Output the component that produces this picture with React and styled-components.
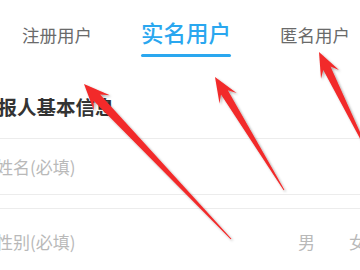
import styled, { createGlobalStyle } from 'styled-components';

const Global = createGlobalStyle`
  html, body {
    margin: 0;
    padding: 0;
    background: #fff;
    overflow: hidden;
  }
  body {
    font-family: "Noto Sans CJK SC", "Noto Sans", sans-serif;
    width: 360px;
    height: 270px;
  }
`;

const Page = styled.div`
  position: relative;
  width: 360px;
  height: 270px;
  overflow: hidden;
`;

const TabBar = styled.div`
  display: flex;
  align-items: flex-end;
  gap: 49px;
  padding: 18px 0 0 22px;
  height: 39px;
`;

const Tab = styled.div`
  display: flex;
  flex-direction: column;
  align-items: center;
  font-size: ${p => (p.active ? '22.5px' : '17.5px')};
  line-height: 1;
  color: ${p => (p.active ? '#2aa7ef' : '#6a6a6a')};
  font-weight: ${p => (p.active ? 500 : 400)};
  white-space: nowrap;
  padding-bottom: ${p => (p.active ? '0' : '14px')};

  &::after {
    content: '';
    display: ${p => (p.active ? 'block' : 'none')};
    width: 100%;
    height: 3px;
    margin-top: 11px;
    border-radius: 2px;
    background: #2aa7ef;
  }
`;

const SectionTitle = styled.div`
  margin: 40px 0 0 -22px;
  font-size: 19.5px;
  line-height: 1;
  font-weight: 700;
  color: #333;
  height: 24px;
  border-bottom: 1px solid #ececec;
  padding-bottom: 17px;
  white-space: nowrap;
`;

const Row = styled.div`
  display: flex;
  align-items: center;
  box-sizing: border-box;
  height: ${p => (p.last ? '60px' : '56px')};
  padding-top: ${p => (p.last ? '4px' : '0')};
  margin: 0 -6px 0 -4px;
  font-size: 17px;
  color: #b9b9b9;
  border-bottom: ${p => (p.last ? 'none' : '1px solid #ececec')};
  white-space: nowrap;
`;

const Spacer = styled.div`
  height: 13px;
  border-bottom: 1px solid #ececec;
`;

const Label = styled.span`
  flex: 1;
`;

const Choice = styled.span`
  margin-left: 34px;
  color: #b9b9b9;
`;

const Overlay = styled.svg`
  position: absolute;
  left: 0;
  top: 0;
  pointer-events: none;
`;

function arrowPoints(tx, ty, ex, ey, headLen, headHalf, shaftHalf) {
  const dx = ex - tx;
  const dy = ey - ty;
  const len = Math.hypot(dx, dy);
  const ux = dx / len;
  const uy = dy / len;
  const nx = -uy;
  const ny = ux;
  const bx = tx + ux * headLen;
  const by = ty + uy * headLen;
  const mx = tx + ux * headLen * 0.72;
  const my = ty + uy * headLen * 0.72;
  const pts = [
    [tx, ty],
    [bx + nx * headHalf, by + ny * headHalf],
    [mx + nx * shaftHalf, my + ny * shaftHalf],
    [ex + nx * 0.5, ey + ny * 0.5],
    [ex - nx * 0.5, ey - ny * 0.5],
    [mx - nx * shaftHalf, my - ny * shaftHalf],
    [bx - nx * headHalf, by - ny * headHalf],
  ];
  return pts.map(p => p.map(v => v.toFixed(1)).join(',')).join(' ');
}

const arrows = [
  { tip: [84, 84], tail: [231, 239], head: 26, hw: 11, sw: 4.5 },
  { tip: [215, 77], tail: [284, 190], head: 25, hw: 10, sw: 4 },
  { tip: [319, 52], tail: [372, 160], head: 25, hw: 10, sw: 4 },
];

function Arrows() {
  return (
    <Overlay width="360" height="270" viewBox="0 0 360 270">
      <defs>
        <filter id="sh" x="-20%" y="-20%" width="140%" height="140%">
          <feDropShadow dx="1.5" dy="1.5" stdDeviation="1.2" floodColor="#000" floodOpacity="0.35" />
        </filter>
      </defs>
      {arrows.map((a, i) => (
        <polygon
          key={i}
          points={arrowPoints(a.tip[0], a.tip[1], a.tail[0], a.tail[1], a.head, a.hw, a.sw)}
          fill="#f22a2a"
          filter="url(#sh)"
        />
      ))}
    </Overlay>
  );
}

export default function App() {
  return (
    <Page>
      <Global />
      <TabBar>
        <Tab>注册用户</Tab>
        <Tab active>实名用户</Tab>
        <Tab>匿名用户</Tab>
      </TabBar>
      <SectionTitle>举报人基本信息</SectionTitle>
      <Row>
        <Label>姓名(必填)</Label>
      </Row>
      <Spacer />
      <Row last>
        <Label>性别(必填)</Label>
        <Choice>男</Choice>
        <Choice>女</Choice>
      </Row>
      <Arrows />
    </Page>
  );
}
